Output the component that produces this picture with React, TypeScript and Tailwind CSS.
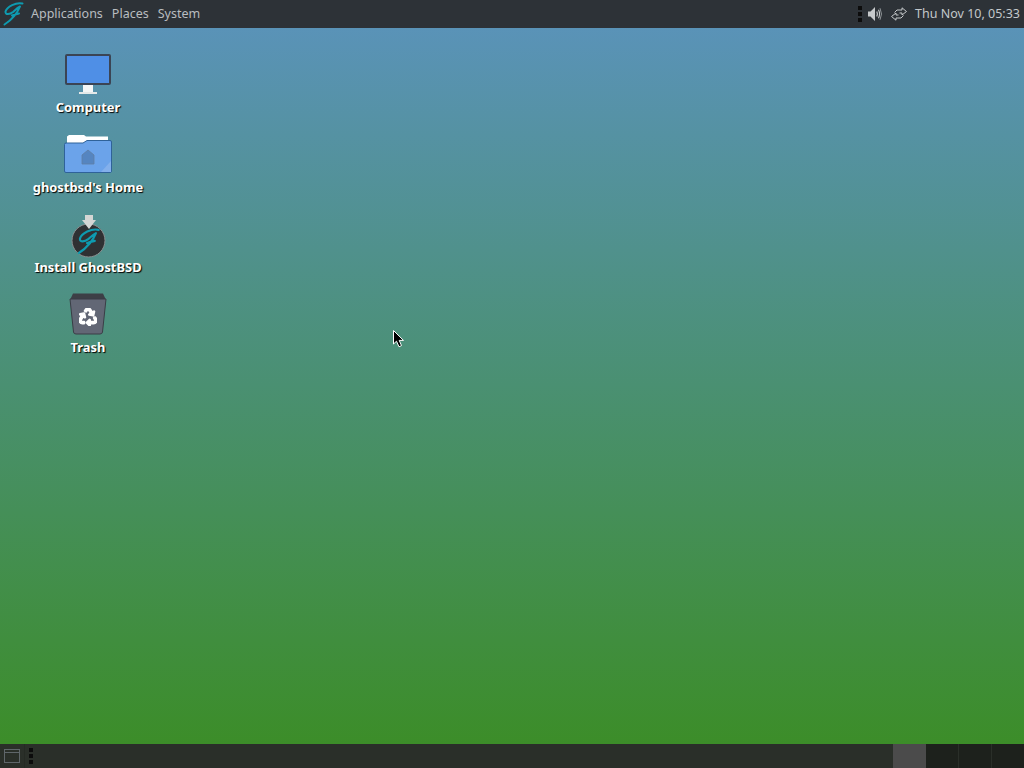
import { FaRecycle } from "react-icons/fa";

const font = { fontFamily: '"Noto Sans", sans-serif' };

// script "G" used by the panel logo and the installer icon
const G_STROKE = "M21.5 3.5 C15 2 6 6.5 4.5 11.5 C4 15 9 14.5 12 12 C14 10.2 16 8 19 6.5 C17 12 11 20 3.5 24.5 M11 15.5 C13.5 14.5 15.5 14 18 13.5";

function Handle({ className }: { className?: string }) {
  return (
    <div className={`flex flex-col gap-[2px] ${className ?? ""}`}>
      <div className="w-1 h-1 bg-[#0c0c0c]" />
      <div className="w-1 h-1 bg-[#0c0c0c]" />
      <div className="w-1 h-1 bg-[#0c0c0c]" />
    </div>
  );
}

function ComputerIcon() {
  return (
    <svg width="46" height="40" viewBox="0 0 46 40">
      <rect x="1" y="1" width="44" height="29" rx="1" fill="#4f8fe6" stroke="#3b4454" strokeWidth="2" />
      <rect x="18" y="31" width="10" height="7" fill="#f4f6f6" />
      <rect x="14" y="38" width="18" height="2" fill="#e4e8e8" />
    </svg>
  );
}

function HomeIcon() {
  return (
    <svg width="48" height="38" viewBox="0 0 48 38">
      <path d="M3 1.5 L5 0 H20 L22 1.5 H44 V8 H3 Z" fill="#ffffff" />
      <path d="M2 8 H19 L23 5.5 H46 Q47.5 5.5 47.5 7 V36 Q47.5 37.5 46 37.5 H2 Q0.5 37.5 0.5 36 V9.5 Q0.5 8 2 8 Z" fill="#6ba3ea" stroke="#2f6299" strokeWidth="1" />
      <path d="M47 26 V37 H37 Z" fill="#83b0ec" />
      <path d="M24 15 L30 20 V29 H18 V20 Z" fill="#5585c0" stroke="#5f7ea3" strokeWidth="0.8" />
    </svg>
  );
}

function InstallIcon() {
  return (
    <svg width="36" height="48" viewBox="0 -4 36 48">
      <circle cx="18.5" cy="26.5" r="16.5" fill="#2f3133" stroke="#8a8f90" strokeWidth="1" />
      <path d="M15 1 H23 V6 H26 L19 15 L12 6 H15 Z" fill="#d4d6d4" />
      <path d={G_STROKE} transform="translate(5 12) scale(1.1)" fill="none" stroke="#0e9bb0" strokeWidth="2" strokeLinecap="round" strokeLinejoin="round" />
    </svg>
  );
}

function TrashIcon() {
  return (
    <svg width="38" height="42" viewBox="0 0 38 42">
      <path d="M1 7 L4 0.5 H34 L37 7 Z" fill="#3d3f46" />
      <path d="M1 6 H37 L33.5 39 Q33.3 41 31 41 H7 Q4.7 41 4.5 39 Z" fill="#626775" stroke="#3a3d46" strokeWidth="1" />
      <FaRecycle x={10} y={15} size={18} color="#ffffff" strokeWidth={40} />
    </svg>
  );
}

function DesktopIcon({ label, icon }: { label: string; icon: React.ReactNode }) {
  return (
    <div className="w-[120px] h-[80px] flex flex-col items-center">
      <div className="h-[48px] flex items-center justify-center">{icon}</div>
      <span className="text-[12.9px] leading-[18px] font-bold text-white whitespace-nowrap [text-shadow:1px_1px_1px_#000]">
        {label}
      </span>
    </div>
  );
}

function SpeakerIcon() {
  return (
    <svg width="16" height="16" viewBox="0 0 16 16" fill="none">
      <path d="M1 5.5 H3.5 L8 1 V15 L3.5 10.5 H1 Z" fill="#c6c9cb" />
      <path d="M9.8 5.5 Q11 8 9.8 10.5" stroke="#c6c9cb" strokeWidth="1.2" />
      <path d="M11.5 3.8 Q13.6 8 11.5 12.2" stroke="#c6c9cb" strokeWidth="1.1" />
      <path d="M13 2.2 Q16 8 13 13.8" stroke="#8f9497" strokeWidth="1" />
    </svg>
  );
}

function NetworkIcon() {
  return (
    <svg width="16" height="14" viewBox="0 0 16 14" fill="none" stroke="#c6c9cb" strokeWidth="1" strokeLinejoin="round">
      <path d="M11 .8 L15.5 4.5 L11 8 V6 H8.5 M11 .8 V3 H6 L3.5 5.5" />
      <path d="M5 13.2 L.5 9.5 L5 6 V8 H7.5 M5 13.2 V11 H10 L12.5 8.5" />
    </svg>
  );
}

function Cursor() {
  return (
    <svg width="12" height="18" viewBox="0 0 12 18" className="absolute left-[393px] top-[330px]">
      <path d="M0.5 0.5 V14 L3.5 11.2 L6 16.8 L8.5 15.6 L6.2 10.4 H10.5 Z" fill="#000" stroke="#fff" strokeWidth="1" />
    </svg>
  );
}

export default function App() {
  return (
    <div
      className="relative w-[1024px] h-[768px] overflow-hidden flex flex-col bg-[linear-gradient(180deg,#5b93bd_0%,#4a9072_50%,#3b8d24_100%)]"
      style={font}
    >
      {/* Top panel */}
      <div className="h-[28px] shrink-0 bg-[#2d3237] flex items-center text-[12.5px] text-[#b9bdc0]">
        <svg viewBox="0 0 24 28" className="w-[24px] h-[28px] ml-[1px]" fill="none">
          <path d={G_STROKE} stroke="#0e9bb0" strokeWidth="2" strokeLinecap="round" strokeLinejoin="round" />
        </svg>
        <div className="flex items-center gap-[9px] ml-[6px]">
          <span>Applications</span>
          <span>Places</span>
          <span>System</span>
        </div>
        <div className="ml-auto flex items-center h-full">
          <Handle className="mr-[5px]" />
          <SpeakerIcon />
          <div className="ml-[8px]">
            <NetworkIcon />
          </div>
          <span className="ml-[8px] mr-[4px] text-[#c3c8cb]">Thu Nov 10, 05:33</span>
        </div>
      </div>

      {/* Desktop */}
      <div className="flex-1 pl-[28px] pt-[22px]">
        <DesktopIcon label="Computer" icon={<ComputerIcon />} />
        <DesktopIcon label="ghostbsd's Home" icon={<HomeIcon />} />
        <DesktopIcon label="Install GhostBSD" icon={<InstallIcon />} />
        <DesktopIcon label="Trash" icon={<TrashIcon />} />
      </div>

      {/* Bottom panel */}
      <div className="h-[24px] shrink-0 bg-[#2a2f29] flex items-stretch">
        <div className="w-[25px] flex items-center justify-start pl-[4px] border-r border-[#252a24]">
          <div className="w-[16px] h-[14px] border border-[#5f666a] flex flex-col">
            <div className="h-[3px] border-b border-[#5f666a]" />
          </div>
        </div>
        <Handle className="ml-[4px] justify-center" />
        <div className="ml-auto flex">
          <div className="w-[33px] bg-[#4b4b4b]" />
          <div className="w-[33px] bg-[#1d211c] border-r border-[#2a2f29]" />
          <div className="w-[33px] bg-[#1d211c] border-r border-[#2a2f29]" />
          <div className="w-[32px] bg-[#1d211c]" />
        </div>
      </div>

      <Cursor />
    </div>
  );
}
